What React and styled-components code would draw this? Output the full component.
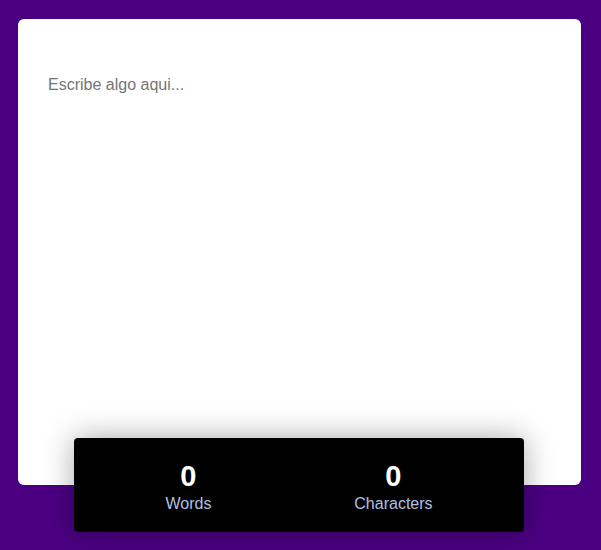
import { useState } from "react"
import styled, { createGlobalStyle } from "styled-components"

const GlobalStyle = createGlobalStyle`
    html, body {
        margin: 0;
        padding: 0;
        height: 100%;
        background: #4b0082;
        font-family: "Liberation Sans", Arial, sans-serif;
    }
    #root {
        height: 100%;
    }
`

const Page = styled.div`
    height: 550px;
    padding: 19px 0 0 18px;
    box-sizing: border-box;
    display: flex;
    flex-direction: column;
    align-items: flex-start;
`

const Card = styled.div`
    width: 563px;
    height: 466px;
    background: white;
    border-radius: 6px;
    display: flex;
    flex-direction: column;
    overflow: hidden;
`

const TextArea = styled.textarea`
    flex: 1;
    border: none;
    outline: none;
    resize: none;
    padding: 57px 30px 30px;
    font-family: "Liberation Sans", Arial, sans-serif;
    font-size: 16px;
    color: #333;
    background: transparent;

    &::placeholder {
        color: #757575;
    }
`

const Stats = styled.div`
    width: 450px;
    height: 94px;
    margin: -47px 0 0 56px;
    padding: 0 20px;
    box-sizing: border-box;
    background: black;
    border-radius: 4px;
    box-shadow: 0 0 30px rgba(0, 0, 0, 0.35);
    display: flex;
    justify-content: space-around;
    align-items: center;
    position: relative;
`

const Stat = styled.div`
    display: flex;
    flex-direction: column;
    align-items: center;
    padding-top: 4px;
`

const Count = styled.span`
    color: white;
    font-size: 29px;
    font-weight: bold;
    line-height: 32px;
    margin-bottom: 2px;
`

const Label = styled.span`
    color: #b0c0e0;
    font-size: 16px;
    line-height: 20px;
`

const App = () => {
    const [text, setText] = useState('')

    const words = text.trim() === '' ? 0 : text.trim().split(/\s+/).length

    return (
        <>
            <GlobalStyle />
            <Page>
                <Card>
                    <TextArea value={text} placeholder='Escribe algo aqui...' onChange={(e) => setText(e.target.value)} />
                </Card>
                <Stats>
                    <Stat>
                        <Count>{words}</Count>
                        <Label>Words</Label>
                    </Stat>
                    <Stat>
                        <Count>{text.length}</Count>
                        <Label>Characters</Label>
                    </Stat>
                </Stats>
            </Page>
        </>
    )
}

export default App
